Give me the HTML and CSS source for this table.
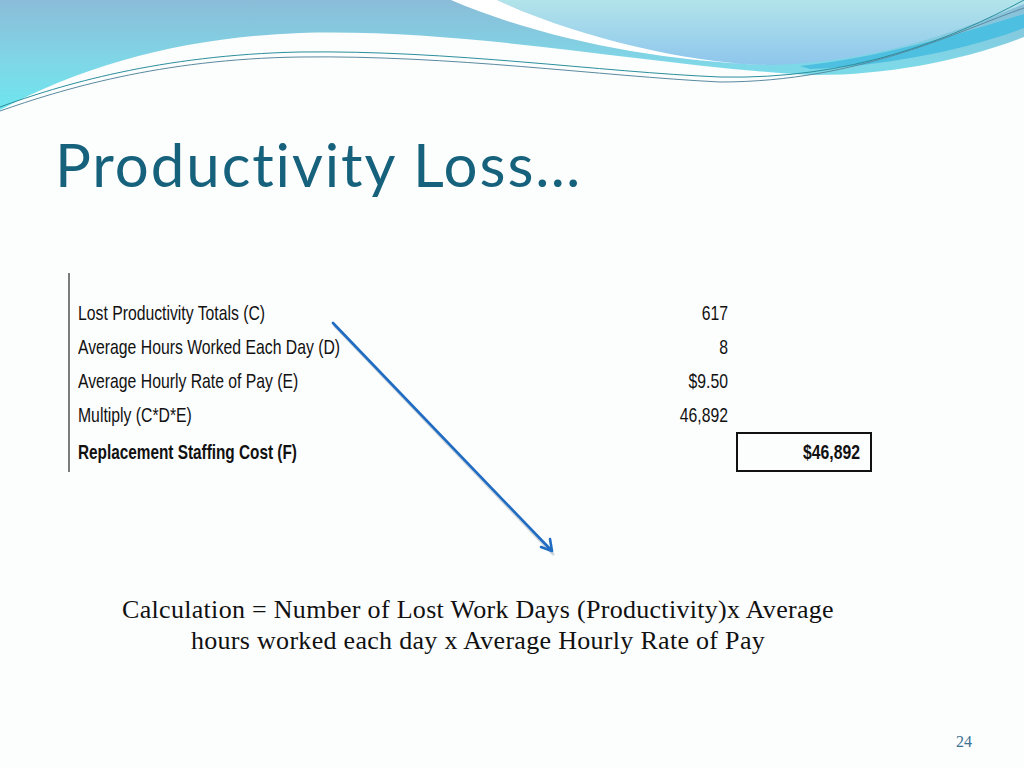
FILE: index.html
```html
<!DOCTYPE html>
<html>
<head>
<meta charset="utf-8">
<link rel="stylesheet" href="styles.css">
</head>
<body>
<div class="slide">
  <svg class="header-art" width="1024" height="120" viewBox="0 0 1024 120" xmlns="http://www.w3.org/2000/svg">
    <defs>
      <linearGradient id="gLeft" x1="0" y1="0" x2="0" y2="1">
        <stop offset="0" stop-color="#8bbcd8"/>
        <stop offset="0.55" stop-color="#7fd6e6"/>
        <stop offset="1" stop-color="#6ee6ee"/>
      </linearGradient>
      <linearGradient id="gRight" x1="0" y1="0" x2="0" y2="1">
        <stop offset="0" stop-color="#b2e4ea"/>
        <stop offset="1" stop-color="#8ec6ec"/>
      </linearGradient>
    </defs>
    <path d="M0,0 H1024 V37 C960,62 880,76 810,75 C650,66 470,28 300,33 C190,37 90,62 0,110 Z" fill="url(#gLeft)"/>
    <path d="M497,0 C580,38 680,64 770,65 C880,62 960,30 1024,4 V0 Z" fill="url(#gRight)"/>
    <path d="M451,0 C540,38 650,60 765,65 C680,62 575,36 497,0 Z" fill="#ffffff"/>
    <path d="M800,66 C880,58 960,34 1024,14 V28 C960,52 880,66 810,69 Z" fill="#4dbfe0"/>
    <path d="M0,107 C60,85 160,55 300,52 C450,50 600,72 720,77 C850,80 950,40 1024,0" fill="none" stroke="#2b8f9c" stroke-width="1"/>
    <path d="M0,111 C60,90 160,59 300,57 C450,55 600,76 720,82 C860,82 960,30 1024,8" fill="none" stroke="#5a8aa0" stroke-width="1"/>
  </svg>

  <h1 class="title">Productivity Loss…</h1>

  <div class="sheet">
    <div class="row"><span class="label">Lost Productivity Totals (C)</span><span class="num">617</span><span class="cell"></span></div>
    <div class="row"><span class="label">Average Hours Worked Each Day (D)</span><span class="num">8</span><span class="cell"></span></div>
    <div class="row"><span class="label">Average Hourly Rate of Pay (E)</span><span class="num">$9.50</span><span class="cell"></span></div>
    <div class="row"><span class="label">Multiply (C*D*E)</span><span class="num">46,892</span><span class="cell"></span></div>
    <div class="row total"><span class="label">Replacement Staffing Cost (F)</span><span class="num"></span><span class="cell boxed"><span class="boxnum">$46,892</span></span></div>
  </div>

  <svg class="arrow" width="1024" height="768" viewBox="0 0 1024 768" xmlns="http://www.w3.org/2000/svg">
    <g stroke="#9aa6b4" stroke-width="3" fill="none" opacity="0.45" stroke-linecap="round">
      <line x1="335" y1="326" x2="553" y2="554"/>
    </g>
    <g stroke="#1f6cc2" stroke-width="2.6" fill="none" stroke-linecap="round" stroke-linejoin="round">
      <line x1="333" y1="323" x2="551" y2="550"/>
      <polyline points="541,547 552,551 550,539"/>
    </g>
  </svg>

  <p class="calc">Calculation = Number of Lost Work Days (Productivity)x Average<br>hours worked each day x Average Hourly Rate of Pay</p>

  <div class="footer"><span class="page">24</span></div>
</div>
</body>
</html>
```

FILE: styles.css
```css
html, body {
  margin: 0;
  padding: 0;
  background: #ffffff;
}

.slide {
  position: relative;
  width: 1024px;
  height: 768px;
  overflow: hidden;
  background: #fcfdfd;
  display: flex;
  flex-direction: column;
}

.header-art {
  position: absolute;
  left: 0;
  top: 0;
}

.arrow {
  position: absolute;
  left: 0;
  top: 0;
  pointer-events: none;
}

.title {
  position: relative;
  margin: 128px 0 0 55px;
  font-family: "Lato", "Open Sans", sans-serif;
  font-weight: 400;
  font-size: 60px;
  line-height: 72px;
  letter-spacing: 1.9px;
  font-variant-ligatures: none;
  color: #16617c;
}

.sheet {
  margin: 73px 0 0 68px;
  border-left: 2px solid #7c7c7c;
  padding: 23px 0 0 8px;
  width: 802px;
  display: flex;
  flex-direction: column;
  font-family: "Liberation Sans", sans-serif;
  font-size: 21px;
  color: #111111;
}

.row {
  display: grid;
  grid-template-columns: 500px 150px 144px;
  column-gap: 0;
  height: 34px;
  align-items: center;
}

.row .cell {
  margin-left: 8px;
}

.label {
  display: inline-block;
  white-space: nowrap;
  transform: scaleX(0.75);
  transform-origin: left center;
}

.row.total .label {
  transform: scaleX(0.73);
}

.num {
  display: block;
  text-align: right;
  white-space: nowrap;
  transform: scaleX(0.75);
  transform-origin: right center;
}

.row.total {
  height: 40px;
  font-weight: 700;
}

.boxed {
  height: 36px;
  border: 2px solid #111111;
  display: flex;
  align-items: center;
  justify-content: flex-end;
  padding-right: 10px;
}

.boxnum {
  display: inline-block;
  transform: scaleX(0.75);
  transform-origin: right center;
}

.calc {
  margin: 122px 0 0 100px;
  width: 756px;
  text-align: center;
  font-family: "Liberation Serif", serif;
  font-size: 26px;
  letter-spacing: 0.3px;
  line-height: 31px;
  color: #111111;
}

.footer {
  margin-top: auto;
  display: flex;
  justify-content: flex-end;
  padding: 0 52px 17px 0;
}

.page {
  font-family: "Liberation Serif", serif;
  font-size: 16px;
  color: #3a7090;
}
```
